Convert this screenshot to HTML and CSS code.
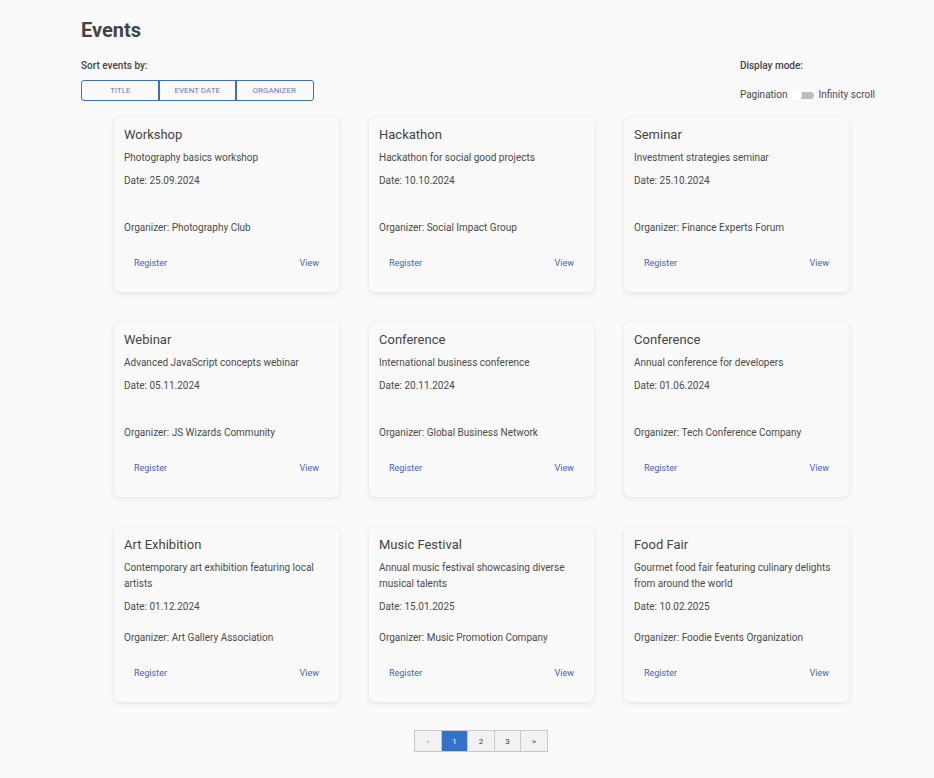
FILE: index.html
```html
<!DOCTYPE html>
<html lang="en">
<head>
<meta charset="utf-8">
<title>Events</title>
<link rel="stylesheet" href="styles.css">
</head>
<body>
<main class="page">
  <h1 class="page-title">Events</h1>
  <div class="toolbar">
    <div class="sort">
      <div class="label">Sort events by:</div>
      <div class="btn-group">
        <button class="sort-btn">Title</button>
        <button class="sort-btn">Event date</button>
        <button class="sort-btn">Organizer</button>
      </div>
    </div>
    <div class="display">
      <div class="label">Display mode:</div>
      <div class="mode">
        <span>Pagination</span>
        <span class="switch"><span class="track"></span><span class="thumb"></span></span>
        <span>Infinity scroll</span>
      </div>
    </div>
  </div>

  <div class="grid">
    <article class="card">
      <div class="content">
        <h2>Workshop</h2>
        <p class="desc">Photography basics workshop</p>
        <p class="date">Date: 25.09.2024</p>
        <p class="org">Organizer: Photography Club</p>
      </div>
      <div class="actions"><button>Register</button><button>View</button></div>
    </article>
    <article class="card">
      <div class="content">
        <h2>Hackathon</h2>
        <p class="desc">Hackathon for social good projects</p>
        <p class="date">Date: 10.10.2024</p>
        <p class="org">Organizer: Social Impact Group</p>
      </div>
      <div class="actions"><button>Register</button><button>View</button></div>
    </article>
    <article class="card">
      <div class="content">
        <h2>Seminar</h2>
        <p class="desc">Investment strategies seminar</p>
        <p class="date">Date: 25.10.2024</p>
        <p class="org">Organizer: Finance Experts Forum</p>
      </div>
      <div class="actions"><button>Register</button><button>View</button></div>
    </article>
    <article class="card">
      <div class="content">
        <h2>Webinar</h2>
        <p class="desc">Advanced JavaScript concepts webinar</p>
        <p class="date">Date: 05.11.2024</p>
        <p class="org">Organizer: JS Wizards Community</p>
      </div>
      <div class="actions"><button>Register</button><button>View</button></div>
    </article>
    <article class="card">
      <div class="content">
        <h2>Conference</h2>
        <p class="desc">International business conference</p>
        <p class="date">Date: 20.11.2024</p>
        <p class="org">Organizer: Global Business Network</p>
      </div>
      <div class="actions"><button>Register</button><button>View</button></div>
    </article>
    <article class="card">
      <div class="content">
        <h2>Conference</h2>
        <p class="desc">Annual conference for developers</p>
        <p class="date">Date: 01.06.2024</p>
        <p class="org">Organizer: Tech Conference Company</p>
      </div>
      <div class="actions"><button>Register</button><button>View</button></div>
    </article>
    <article class="card">
      <div class="content">
        <h2>Art Exhibition</h2>
        <p class="desc">Contemporary art exhibition featuring local artists</p>
        <p class="date">Date: 01.12.2024</p>
        <p class="org">Organizer: Art Gallery Association</p>
      </div>
      <div class="actions"><button>Register</button><button>View</button></div>
    </article>
    <article class="card">
      <div class="content">
        <h2>Music Festival</h2>
        <p class="desc">Annual music festival showcasing diverse musical talents</p>
        <p class="date">Date: 15.01.2025</p>
        <p class="org">Organizer: Music Promotion Company</p>
      </div>
      <div class="actions"><button>Register</button><button>View</button></div>
    </article>
    <article class="card">
      <div class="content">
        <h2>Food Fair</h2>
        <p class="desc">Gourmet food fair featuring culinary delights from around the world</p>
        <p class="date">Date: 10.02.2025</p>
        <p class="org">Organizer: Foodie Events Organization</p>
      </div>
      <div class="actions"><button>Register</button><button>View</button></div>
    </article>
  </div>

  <nav class="pager">
    <button class="pg disabled">&lt;</button>
    <button class="pg active">1</button>
    <button class="pg">2</button>
    <button class="pg">3</button>
    <button class="pg">&gt;</button>
  </nav>
</main>
</body>
</html>
```

FILE: styles.css
```css
* { box-sizing: border-box; }
html, body { margin: 0; padding: 0; }
body {
  background: #fafafa;
  font-family: Roboto, "Liberation Sans", Arial, sans-serif;
  color: #4a4a4a;
}
.page {
  padding: 18px 59px 20px 81px;
}
.page-title {
  margin: 0;
  font-size: 20px;
  font-weight: 700;
  line-height: 24px;
  color: #444;
}
.toolbar {
  display: flex;
  justify-content: space-between;
  margin-top: 17px;
}
.label {
  font-size: 10px;
  font-weight: 500;
  line-height: 12px;
  color: #444;
}
.sort .label { margin-top: 1px; }
.btn-group {
  display: flex;
  margin-top: 8px;
}
.sort-btn {
  width: 78.5px;
  height: 21px;
  background: transparent;
  border: 1.5px solid #3b6fc6;
  margin-left: -1.5px;
  font-family: inherit;
  font-size: 8px;
  text-transform: uppercase;
  color: #7276c8;
  padding: 0;
}
.sort-btn:first-child { margin-left: 0; border-radius: 3px 0 0 3px; }
.sort-btn:last-child { border-radius: 0 3px 3px 0; }
.display { padding-top: 1px; white-space: nowrap; }
.mode {
  display: flex;
  align-items: center;
  margin-top: 17px;
  font-size: 10px;
  line-height: 12px;
  color: #4a4a4a;
}
.switch {
  position: relative;
  width: 26px;
  height: 12px;
  margin: 0 3px 0 2px;
  display: inline-block;
}
.track {
  position: absolute;
  left: 6px; right: 2px; top: 3px;
  height: 7px;
  border-radius: 4px;
  background: #bdbdbd;
}
.thumb {
  position: absolute;
  left: 0; top: 0;
  width: 12px; height: 12px;
  border-radius: 50%;
  background: #fff;
  box-shadow: 0 1px 1px rgba(0,0,0,0.06);
}
.grid {
  display: grid;
  grid-template-columns: repeat(3, 225px);
  gap: 30px;
  margin: 16px 0 0 33px;
}
.card {
  height: 175px;
  background: #fafafa;
  border-radius: 6px;
  box-shadow: 0 2px 6px rgba(0,0,0,0.08), 0 0 2px rgba(0,0,0,0.05);
  display: flex;
  flex-direction: column;
}
.content {
  padding: 9px 10px 18px 10px;
  height: 137px;
  display: flex;
  flex-direction: column;
}
.content h2 {
  margin: 0;
  font-size: 13px;
  font-weight: 400;
  line-height: 17px;
  color: #444;
}
.content p {
  margin: 0;
  font-size: 10px;
  line-height: 16px;
  color: #4a4a4a;
}
.desc { margin-top: 7px !important; }
.date { margin-top: 7px !important; }
.org { margin-top: auto !important; }
.actions {
  display: flex;
  justify-content: space-between;
  padding: 0 12px 0 12px;
  margin-top: 0;
}
.actions button {
  background: none;
  border: 0;
  font-family: inherit;
  font-size: 9px;
  font-weight: 400;
  color: #4460c4;
  padding: 4px 8px;
  line-height: 11px;
}
.pager {
  display: flex;
  justify-content: center;
  width: 735px;
  margin: 28px 0 0 33px;
}
.pg {
  width: 27.6px;
  height: 22px;
  border: 1px solid #c8c8c8;
  background: #f2f2f2;
  margin-left: -1px;
  font-family: inherit;
  font-size: 8px;
  color: #444;
  padding: 0;
}
.pg.disabled { color: #b0b0c8; }
.pg.active { background: #3571c8; color: #fff; }
```
